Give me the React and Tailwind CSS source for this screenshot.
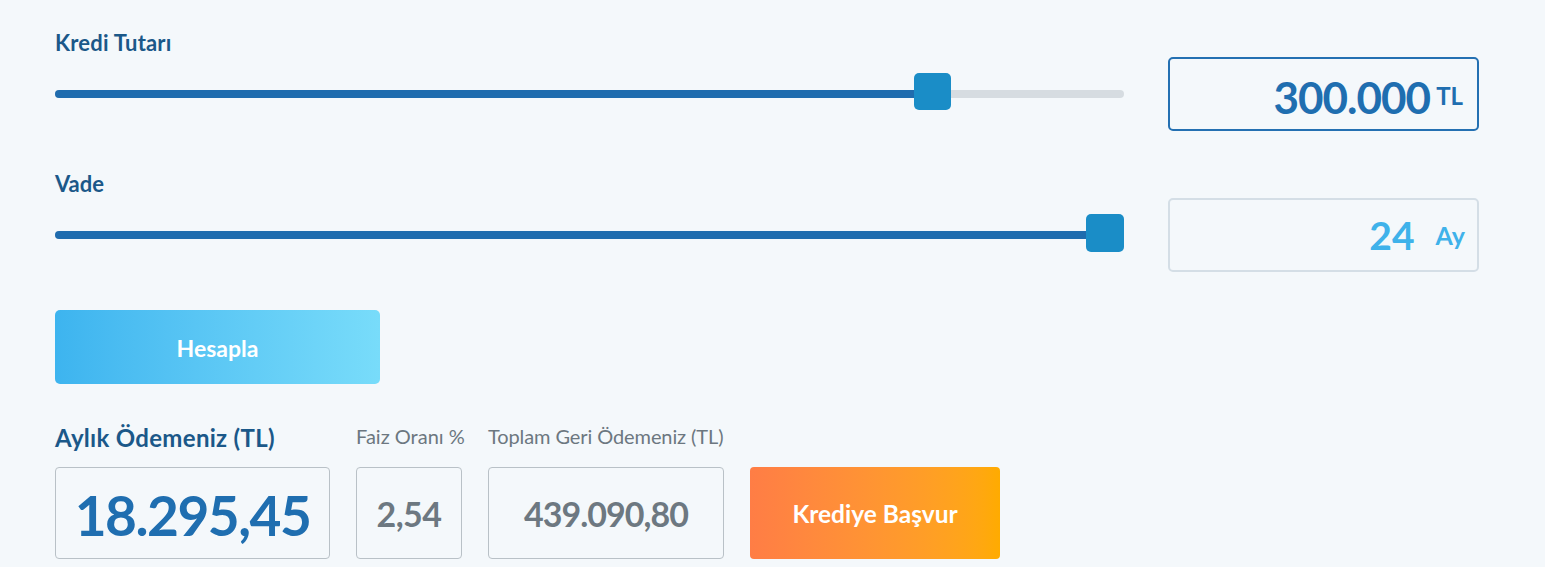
import React from "react";

function Slider({ thumbLeft, fill, thumbW, thumbH, lift }) {
  return (
    <div className="relative w-full h-[8px] rounded-full bg-[#d6dce1]">
      <div className="absolute left-0 top-0 h-[8px] bg-[#1f6cae] rounded-l-full" style={{ width: fill }} />
      <div
        className="absolute rounded-[5px] bg-[#1a8dc7]"
        style={{ left: thumbLeft, width: thumbW, height: thumbH, top: 4 - thumbH / 2 - lift }}
      />
    </div>
  );
}

export default function App() {
  const font = { fontFamily: '"Source Sans Pro", Lato, "Liberation Sans", sans-serif' };
  return (
    <div className="min-h-[567px] bg-[#f4f8fb] pl-[55px] pt-[29px]" style={font}>
      <div className="w-[1424px]">
        {/* Row 1 */}
        <div className="flex items-end gap-[44px]">
          <div className="flex-1 flex flex-col">
            <div className="text-[22px] leading-[28px] font-bold text-[#1b5889] tracking-[0.2px]">Kredi Tutarı</div>
            <div className="h-[74px] flex items-center">
              <Slider thumbLeft={859} fill={870} thumbW={37} thumbH={37} lift={3} />
            </div>
          </div>
          <div className="w-[311px] h-[74px] border-2 border-[#2470b2] rounded-[5px] flex items-baseline justify-end pr-[14px] pt-[16px]">
            <span className="text-[44px] font-bold text-[#1f6eb0] tracking-[-1px] leading-none">300.000</span>
            <span className="relative -top-[9px] text-[24px] font-bold text-[#1f6eb0] ml-[6px] leading-none">TL</span>
          </div>
        </div>

        {/* Row 2 */}
        <div className="flex items-end gap-[44px] mt-[39px]">
          <div className="flex-1 flex flex-col">
            <div className="text-[22px] leading-[28px] font-bold text-[#1b5889]">Vade</div>
            <div className="h-[74px] flex items-center">
              <Slider thumbLeft={1031} fill={1050} thumbW={38} thumbH={38} lift={2} />
            </div>
          </div>
          <div className="w-[311px] h-[74px] border-2 border-[#d4dee6] rounded-[5px] flex items-baseline justify-end pr-[12px] pt-[16px]">
            <span className="text-[39px] font-bold text-[#3fb2ea] leading-none">24</span>
            <span className="relative -top-[5px] text-[25px] font-bold text-[#3fb2ea] ml-[21px] leading-none">Ay</span>
          </div>
        </div>

        {/* Hesapla */}
        <button className="mt-[38px] w-[325px] h-[74px] rounded-[5px] bg-gradient-to-r from-[#3db4ef] to-[#78dcfa] text-white text-[23px] font-bold flex items-center justify-center pt-[3px]">
          Hesapla
        </button>

        {/* Results */}
        <div className="flex items-end gap-[26px] mt-[34px]">
          <div className="flex flex-col w-[275px]">
            <div className="text-[24px] leading-[32px] font-bold text-[#1b5889] whitespace-nowrap tracking-[0.3px]">Aylık Ödemeniz (TL)</div>
            <div className="mt-[13px] w-[275px] h-[92px] border border-[#b9c1c7] rounded-[4px] flex items-center justify-center pt-[4px]">
              <span className="text-[55px] font-bold text-[#1f6eb0] tracking-[-1.5px] leading-none">18.295,45</span>
            </div>
          </div>
          <div className="flex flex-col w-[106px]">
            <div className="text-[20px] leading-[36px] text-[#6c7780] whitespace-nowrap">Faiz Oranı %</div>
            <div className="mt-[13px] w-[106px] h-[92px] border border-[#b9c1c7] rounded-[4px] flex items-center justify-center pt-[2px]">
              <span className="text-[34px] font-bold text-[#6d7881] tracking-[-0.5px] leading-none">2,54</span>
            </div>
          </div>
          <div className="flex flex-col w-[236px]">
            <div className="text-[20px] leading-[36px] text-[#6c7780] whitespace-nowrap tracking-[-0.1px]">Toplam Geri Ödemeniz (TL)</div>
            <div className="mt-[13px] w-[236px] h-[92px] border border-[#b9c1c7] rounded-[4px] flex items-center justify-center pt-[2px]">
              <span className="text-[34px] font-bold text-[#6d7881] tracking-[-1px] leading-none">439.090,80</span>
            </div>
          </div>
          <button className="w-[250px] h-[92px] rounded-[4px] bg-gradient-to-r from-[#ff7d45] to-[#ffab00] text-white text-[24.5px] font-bold flex items-center justify-center pt-[2px]">
            Krediye Başvur
          </button>
        </div>
      </div>
    </div>
  );
}
